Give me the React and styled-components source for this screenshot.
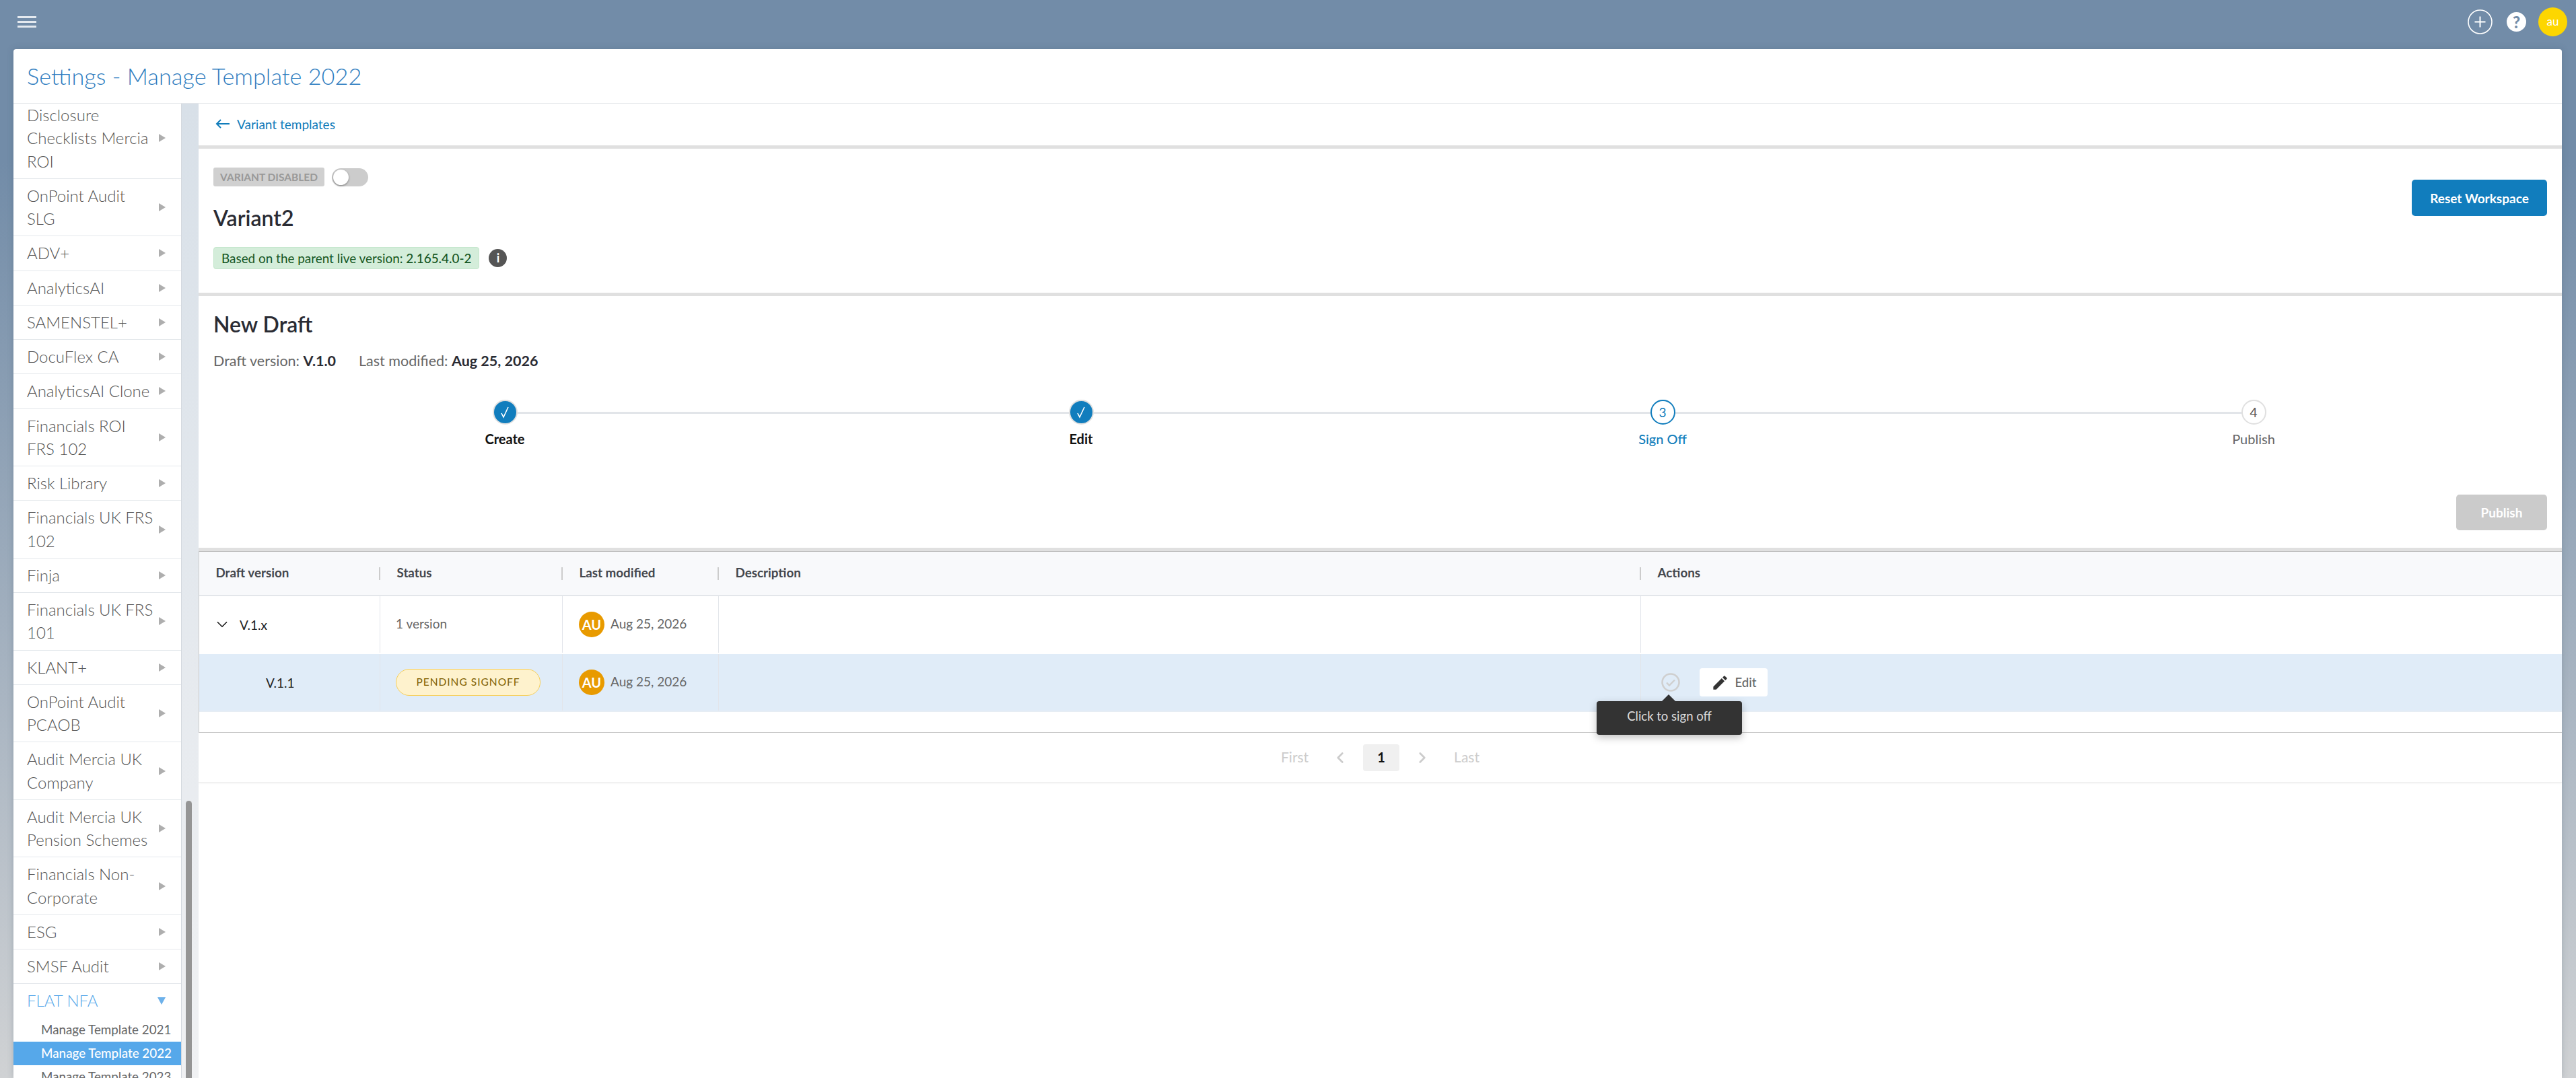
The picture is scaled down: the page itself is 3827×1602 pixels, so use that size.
import styled, { createGlobalStyle } from "styled-components"
import { MdEdit } from "react-icons/md"
import { ChevronDown, ChevronLeft, ChevronRight } from "lucide-react"

const GlobalStyle = createGlobalStyle`
    html, body {
        margin: 0;
        padding: 0;
    }
    body {
        font-family: "Lato", "Open Sans", sans-serif;
        overflow: hidden;
    }
    * {
        box-sizing: border-box;
    }
`

const Page = styled.div`
    width: 3827px;
    height: 1602px;
    overflow: hidden;
    display: flex;
    flex-direction: column;
    background: linear-gradient(180deg, #728ca8 0%, #728ca8 15%, #d0d2d4 100%);
`
const TopBar = styled.div`
    height: 73px;
    flex-shrink: 0;
    display: flex;
    align-items: center;
    justify-content: space-between;
    padding: 0 13px 8px 26px;
`
const Burger = styled.div`
    width: 28px;
    display: flex;
    flex-direction: column;
    gap: 4px;
    span {
        height: 3px;
        background: #e4e9ef;
    }
`
const TopActions = styled.div`
    display: flex;
    align-items: center;
`
const HelpCircle = styled.div`
    width: 29px;
    height: 29px;
    margin: 0 18px 0 21px;
    border-radius: 50%;
    background: #fff;
    color: #728ca8;
    font-size: 24px;
    font-weight: 900;
    line-height: 29px;
    text-align: center;
`
const UserBubble = styled.div`
    width: 43px;
    height: 43px;
    border-radius: 50%;
    background: #fdd600;
    color: #fff;
    font-size: 17px;
    line-height: 41px;
    text-align: center;
`
const Card = styled.div`
    flex: 1;
    min-height: 0;
    margin: 0 21px 0 20px;
    background: #fff;
    border-radius: 4px 4px 0 0;
    box-shadow: 0 0 10px rgba(60, 80, 100, 0.25);
    display: flex;
    flex-direction: column;
`
const CardHeader = styled.div`
    height: 81px;
    flex-shrink: 0;
    padding: 0 0 2px 20px;
    display: flex;
    align-items: center;
    border-bottom: 1px solid #e4e6e9;
`
const PageTitle = styled.h1`
    margin: 0;
    font-size: 34.3px;
    font-weight: 300;
    color: #2f7dc0;
`
const Body = styled.div`
    flex: 1;
    min-height: 0;
    display: flex;
`
const Sidebar = styled.div`
    width: 250px;
    flex-shrink: 0;
    overflow: hidden;
    border-right: 1px solid #d4d9df;
`
const MenuList = styled.div`
    margin-top: -8px;
`
const MenuItem = styled.div`
    display: flex;
    align-items: center;
    justify-content: space-between;
    padding: 8px 23px 8px 20px;
    border-bottom: ${(p) => (p.$open ? "none" : "1.5px solid #e4e8ec")};
`
const MenuLabel = styled.div`
    width: 190px;
    font-size: 24px;
    font-weight: 300;
    line-height: 34.25px;
    color: ${(p) => (p.$open ? "#58a8ea" : "#555")};
`
const Arrow = styled.span`
    width: 0;
    height: 0;
    border-style: solid;
    ${(p) =>
        p.$open
            ? "border-width: 11px 6px 0 6px; border-color: #6db1ea transparent transparent transparent;"
            : "border-width: 6px 0 6px 10px; border-color: transparent transparent transparent #aeaeae;"}
`
const SubItem = styled.div`
    height: 35px;
    padding-left: 41px;
    font-size: 18.8px;
    line-height: 34px;
    white-space: nowrap;
    background: ${(p) => (p.$active ? "#56a8ea" : "transparent")};
    color: ${(p) => (p.$active ? "#fff" : "#666")};
    font-weight: ${(p) => (p.$active ? 500 : 400)};
`
const Strip = styled.div`
    position: relative;
    width: 25px;
    flex-shrink: 0;
    background: linear-gradient(180deg, #d8e0e8 0%, #f0f1f3 100%);
`
const ScrollThumb = styled.div`
    position: absolute;
    left: 6px;
    top: 1036px;
    bottom: 0;
    width: 9px;
    border-radius: 5px 5px 0 0;
    background: #959595;
`
const Main = styled.div`
    flex: 1;
    min-width: 0;
    display: flex;
    flex-direction: column;
`
const BackRow = styled.div`
    height: 62px;
    flex-shrink: 0;
    padding: 0 0 2px 25px;
    display: flex;
    align-items: center;
    gap: 11px;
    font-size: 19px;
    color: #117dbb;
`
const Section = styled.div`
    flex-shrink: 0;
    border-top: 5px solid #e0e0e0;
`
const VariantBox = styled(Section)`
    height: 219px;
    padding: 28px 22px 0 22px;
    display: flex;
    justify-content: space-between;
`
const VariantInfo = styled.div`
    display: flex;
    flex-direction: column;
    align-items: flex-start;
`
const ToggleRow = styled.div`
    display: flex;
    align-items: center;
    gap: 11px;
`
const DisabledTag = styled.span`
    width: 165px;
    height: 28px;
    border-radius: 3px;
    background: #d0d0d0;
    color: #999;
    font-size: 15.5px;
    font-weight: 700;
    line-height: 28px;
    text-align: center;
`
const Toggle = styled.div`
    width: 54px;
    height: 27px;
    border-radius: 14px;
    background: #ccc;
    padding: 2px;
    span {
        display: block;
        width: 23px;
        height: 23px;
        border-radius: 50%;
        background: #fff;
        box-shadow: 0 1px 3px rgba(0, 0, 0, 0.4);
    }
`
const Heading = styled.h2`
    margin: 0;
    font-size: 32px;
    font-weight: 600;
    color: #2a2b33;
`
const VariantName = styled(Heading)`
    margin-top: 27px;
    line-height: 40px;
`
const ParentRow = styled.div`
    margin-top: 23px;
    display: flex;
    align-items: center;
    gap: 14px;
`
const ParentTag = styled.span`
    height: 33px;
    padding: 0 11px;
    border: 1px solid #c3e6cb;
    border-radius: 4px;
    background: #d4edda;
    color: #155724;
    font-size: 18.9px;
    line-height: 31px;
    b {
        font-weight: 500;
    }
`
const InfoDot = styled.span`
    width: 27px;
    height: 27px;
    border-radius: 50%;
    background: #555;
    color: #fff;
    font-size: 18px;
    font-weight: 700;
    line-height: 27px;
    text-align: center;
`
const PrimaryButton = styled.button`
    width: ${(p) => p.$width}px;
    height: ${(p) => p.$height}px;
    margin-top: ${(p) => p.$top || 0}px;
    border: none;
    border-radius: 5px;
    background: ${(p) => (p.disabled ? "#cbcbcb" : "#117dbd")};
    color: #fff;
    font-family: inherit;
    font-size: 19px;
    font-weight: 700;
`
const DraftBox = styled(Section)`
    height: 379px;
    padding: 22px 22px 0 22px;
`
const DraftName = styled(Heading)`
    line-height: 40px;
`
const Meta = styled.div`
    margin-top: 21px;
    display: flex;
    gap: 34px;
    font-size: 21.5px;
    line-height: 26px;
    color: #666;
    b {
        font-weight: 700;
        color: #2a2b33;
    }
`
const Stepper = styled.div`
    position: relative;
    margin: 45px -22px 0 -22px;
    padding-left: 27px;
    display: grid;
    grid-template-columns: 856px 856px 872px 884px;
    &::before {
        content: "";
        position: absolute;
        top: 18px;
        left: 455px;
        right: 458px;
        height: 3px;
        background: #e2e5e9;
    }
`
const Step = styled.div`
    position: relative;
    display: flex;
    flex-direction: column;
    align-items: center;
    gap: 9px;
`
const StepDot = styled.div`
    width: 37px;
    height: 37px;
    border-radius: 50%;
    display: flex;
    align-items: center;
    justify-content: center;
    font-size: 19px;
    border: 2px solid ${(p) => (p.$state === "active" ? "#117dbd" : "#e0e0e0")};
    background: ${(p) => (p.$state === "done" ? "#117dbd" : "#fff")};
    color: ${(p) => (p.$state === "active" ? "#117dbd" : "#555")};
`
const StepLabel = styled.div`
    font-size: 20px;
    line-height: 24px;
    font-weight: ${(p) => (p.$state === "todo" ? 400 : p.$state === "active" ? 500 : 700)};
    color: ${(p) => (p.$state === "done" ? "#111" : p.$state === "active" ? "#117dbb" : "#666")};
`
const PublishRow = styled.div`
    display: flex;
    justify-content: flex-end;
`
const Table = styled.div`
    flex-shrink: 0;
    position: relative;
    height: 270px;
    border-top: 1px solid #bbb;
    border-left: 1px solid #ccc;
    border-bottom: 1px solid #c8c8c8;
`
const TableRow = styled.div`
    display: grid;
    grid-template-columns: 269px 271px 232px 1370px 1fr;
    height: ${(p) => (p.$head ? 66 : 86)}px;
    background: ${(p) => (p.$head ? "#f8f9fb" : p.$selected ? "#e0ecf8" : "#fff")};
    border-bottom: 2px solid ${(p) => (p.$selected ? "#e6edf4" : p.$head ? "#e3e6ea" : "transparent")};
`
const HeadCell = styled.div`
    display: flex;
    align-items: center;
    padding: 0 0 3px 24.5px;
    position: relative;
    font-size: 18.8px;
    font-weight: 700;
    color: #44474d;
    &:not(:last-child)::after {
        content: "";
        position: absolute;
        right: 0;
        top: 23px;
        width: 2px;
        height: 19px;
        background: #ccc;
    }
`
const Cell = styled.div`
    display: flex;
    align-items: center;
    gap: 9px;
    padding-left: ${(p) => p.$indent || 23}px;
    border-right: 1px solid #e2e5ea;
    font-size: 19px;
    color: ${(p) => (p.$dark ? "#222" : "#666")};
    &:last-child {
        border-right: none;
    }
`
const CellText = styled.span`
    margin-bottom: 4px;
`
const VersionText = styled.span`
    margin-left: 4px;
`
const Avatar = styled.span`
    width: 38px;
    height: 38px;
    margin-left: 1px;
    border-radius: 50%;
    background: #e89a00;
    color: #fff;
    font-size: 20px;
    font-weight: 700;
    line-height: 38px;
    text-align: center;
`
const StatusPill = styled.span`
    width: 215px;
    height: 40px;
    border: 1.5px solid #f7cf5a;
    border-radius: 20px;
    background: #fef2cd;
    color: #7f6000;
    font-size: 15.5px;
    letter-spacing: 1px;
    line-height: 36px;
    text-align: center;
`
const ActionsWrap = styled.div`
    position: relative;
    display: flex;
    align-items: center;
    gap: 29px;
    padding-left: 7px;
`
const EditButton = styled.div`
    width: 101px;
    height: 42px;
    border-radius: 4px;
    background: #fff;
    display: flex;
    align-items: center;
    justify-content: center;
    gap: 9px;
    font-size: 18.5px;
    font-weight: 500;
    color: #666;
`
const Tooltip = styled.div`
    position: absolute;
    top: 49px;
    left: -89px;
    width: 216px;
    height: 50px;
    border-radius: 4px;
    background: #333;
    color: #ddd;
    font-size: 18.5px;
    line-height: 45px;
    text-align: center;
    box-shadow: 0 4px 12px rgba(0, 0, 0, 0.25);
    &::before {
        content: "";
        position: absolute;
        top: -10px;
        left: 97px;
        border-style: solid;
        border-width: 0 10px 10px 10px;
        border-color: transparent transparent #333 transparent;
    }
`
const Pagination = styled.div`
    height: 74px;
    flex-shrink: 0;
    display: flex;
    align-items: center;
    justify-content: center;
    gap: 34px;
    font-size: 21px;
    color: #ccc;
    border-bottom: 1px solid #eee;
    box-shadow: 0 1px 3px rgba(0, 0, 0, 0.06);
`
const PageWord = styled.span`
    margin-bottom: 3px;
`
const PageGroup = styled.div`
    display: flex;
    align-items: center;
    gap: 21px;
`
const PageNum = styled.span`
    width: 54px;
    height: 40px;
    border-radius: 4px;
    background: #f0f0f0;
    color: #111;
    font-size: 20px;
    font-weight: 700;
    line-height: 38px;
    text-align: center;
`

const menu = [
    "Disclosure Checklists Mercia ROI",
    "OnPoint Audit SLG",
    "ADV+",
    "AnalyticsAI",
    "SAMENSTEL+",
    "DocuFlex CA",
    "AnalyticsAI Clone",
    "Financials ROI FRS 102",
    "Risk Library",
    "Financials UK FRS 102",
    "Finja",
    "Financials UK FRS 101",
    "KLANT+",
    "OnPoint Audit PCAOB",
    "Audit Mercia UK Company",
    "Audit Mercia UK Pension Schemes",
    "Financials Non-Corporate",
    "ESG",
    "SMSF Audit",
]

const steps = [
    { label: "Create", state: "done" },
    { label: "Edit", state: "done" },
    { label: "Sign Off", state: "active", num: 3 },
    { label: "Publish", state: "todo", num: 4 },
]

const App = () => {
    return (
        <Page>
            <GlobalStyle />
            <TopBar>
                <Burger>
                    <span />
                    <span />
                    <span />
                </Burger>
                <TopActions>
                    <svg width="37" height="37" viewBox="0 0 37 37" fill="none" stroke="#fff">
                        <circle cx="18.5" cy="18.5" r="17.5" strokeWidth="1.6" />
                        <path d="M18.5 10.5v16M10.5 18.5h16" strokeWidth="2" />
                    </svg>
                    <HelpCircle>?</HelpCircle>
                    <UserBubble>au</UserBubble>
                </TopActions>
            </TopBar>
            <Card>
                <CardHeader>
                    <PageTitle>Settings - Manage Template 2022</PageTitle>
                </CardHeader>
                <Body>
                    <Sidebar>
                        <MenuList>
                            {menu.map((name) => (
                                <MenuItem key={name}>
                                    <MenuLabel>{name}</MenuLabel>
                                    <Arrow />
                                </MenuItem>
                            ))}
                            <MenuItem $open>
                                <MenuLabel $open>FLAT NFA</MenuLabel>
                                <Arrow $open />
                            </MenuItem>
                            <SubItem>Manage Template 2021</SubItem>
                            <SubItem $active>Manage Template 2022</SubItem>
                            <SubItem>Manage Template 2023</SubItem>
                        </MenuList>
                    </Sidebar>
                    <Strip>
                        <ScrollThumb />
                    </Strip>
                    <Main>
                        <BackRow>
                            <svg width="21" height="14" viewBox="0 0 21 14" fill="none" stroke="#117dbb" strokeWidth="2">
                                <path d="M21 7H2M8 1L2 7l6 6" />
                            </svg>
                            Variant templates
                        </BackRow>
                        <VariantBox>
                            <VariantInfo>
                                <ToggleRow>
                                    <DisabledTag>VARIANT DISABLED</DisabledTag>
                                    <Toggle>
                                        <span />
                                    </Toggle>
                                </ToggleRow>
                                <VariantName>Variant2</VariantName>
                                <ParentRow>
                                    <ParentTag>
                                        Based on the parent live version: <b>2.165.4.0-2</b>
                                    </ParentTag>
                                    <InfoDot>i</InfoDot>
                                </ParentRow>
                            </VariantInfo>
                            <PrimaryButton $width={201} $height={54} $top={18}>
                                Reset Workspace
                            </PrimaryButton>
                        </VariantBox>
                        <DraftBox>
                            <DraftName>New Draft</DraftName>
                            <Meta>
                                <span>
                                    Draft version: <b>V.1.0</b>
                                </span>
                                <span>
                                    Last modified: <b>Aug 25, 2026</b>
                                </span>
                            </Meta>
                            <Stepper>
                                {steps.map((s) => (
                                    <Step key={s.label}>
                                        <StepDot $state={s.state}>
                                            {s.state === "done" ? (
                                                <svg width="18" height="20" viewBox="0 0 18 20" fill="none" stroke="#fff" strokeWidth="1.6">
                                                    <path d="M4 11l3 6L14 2" />
                                                </svg>
                                            ) : (
                                                s.num
                                            )}
                                        </StepDot>
                                        <StepLabel $state={s.state}>{s.label}</StepLabel>
                                    </Step>
                                ))}
                            </Stepper>
                            <PublishRow>
                                <PrimaryButton disabled $width={135} $height={53} $top={71}>
                                    Publish
                                </PrimaryButton>
                            </PublishRow>
                        </DraftBox>
                        <Section>
                            <Table>
                                <TableRow $head>
                                    <HeadCell>Draft version</HeadCell>
                                    <HeadCell>Status</HeadCell>
                                    <HeadCell>Last modified</HeadCell>
                                    <HeadCell>Description</HeadCell>
                                    <HeadCell>Actions</HeadCell>
                                </TableRow>
                                <TableRow>
                                    <Cell $dark $indent={21}>
                                        <ChevronDown size={26} color="#222" strokeWidth={1.6} />
                                        <VersionText>V.1.x</VersionText>
                                    </Cell>
                                    <Cell>
                                        <CellText>1 version</CellText>
                                    </Cell>
                                    <Cell>
                                        <Avatar>AU</Avatar>
                                        <CellText>Aug 25, 2026</CellText>
                                    </Cell>
                                    <Cell />
                                    <Cell />
                                </TableRow>
                                <TableRow $selected>
                                    <Cell $dark $indent={99}>
                                        V.1.1
                                    </Cell>
                                    <Cell>
                                        <StatusPill>PENDING SIGNOFF</StatusPill>
                                    </Cell>
                                    <Cell>
                                        <Avatar>AU</Avatar>
                                        <CellText>Aug 25, 2026</CellText>
                                    </Cell>
                                    <Cell />
                                    <Cell>
                                        <ActionsWrap>
                                            <svg width="28" height="28" viewBox="0 0 28 28" fill="none" stroke="#cfcfcf">
                                                <circle cx="14" cy="14" r="12.5" strokeWidth="2.6" />
                                                <path d="M8 14.5l4 4 8-8" strokeWidth="2.4" />
                                            </svg>
                                            <EditButton>
                                                <MdEdit size={27} color="#333" />
                                                Edit
                                            </EditButton>
                                            <Tooltip>Click to sign off</Tooltip>
                                        </ActionsWrap>
                                    </Cell>
                                </TableRow>
                            </Table>
                        </Section>
                        <Pagination>
                            <PageWord>First</PageWord>
                            <PageGroup>
                                <ChevronLeft size={26} color="#ccc" strokeWidth={2.5} />
                                <PageNum>1</PageNum>
                                <ChevronRight size={26} color="#ccc" strokeWidth={2.5} />
                            </PageGroup>
                            <PageWord>Last</PageWord>
                        </Pagination>
                    </Main>
                </Body>
            </Card>
        </Page>
    )
}

export default App
